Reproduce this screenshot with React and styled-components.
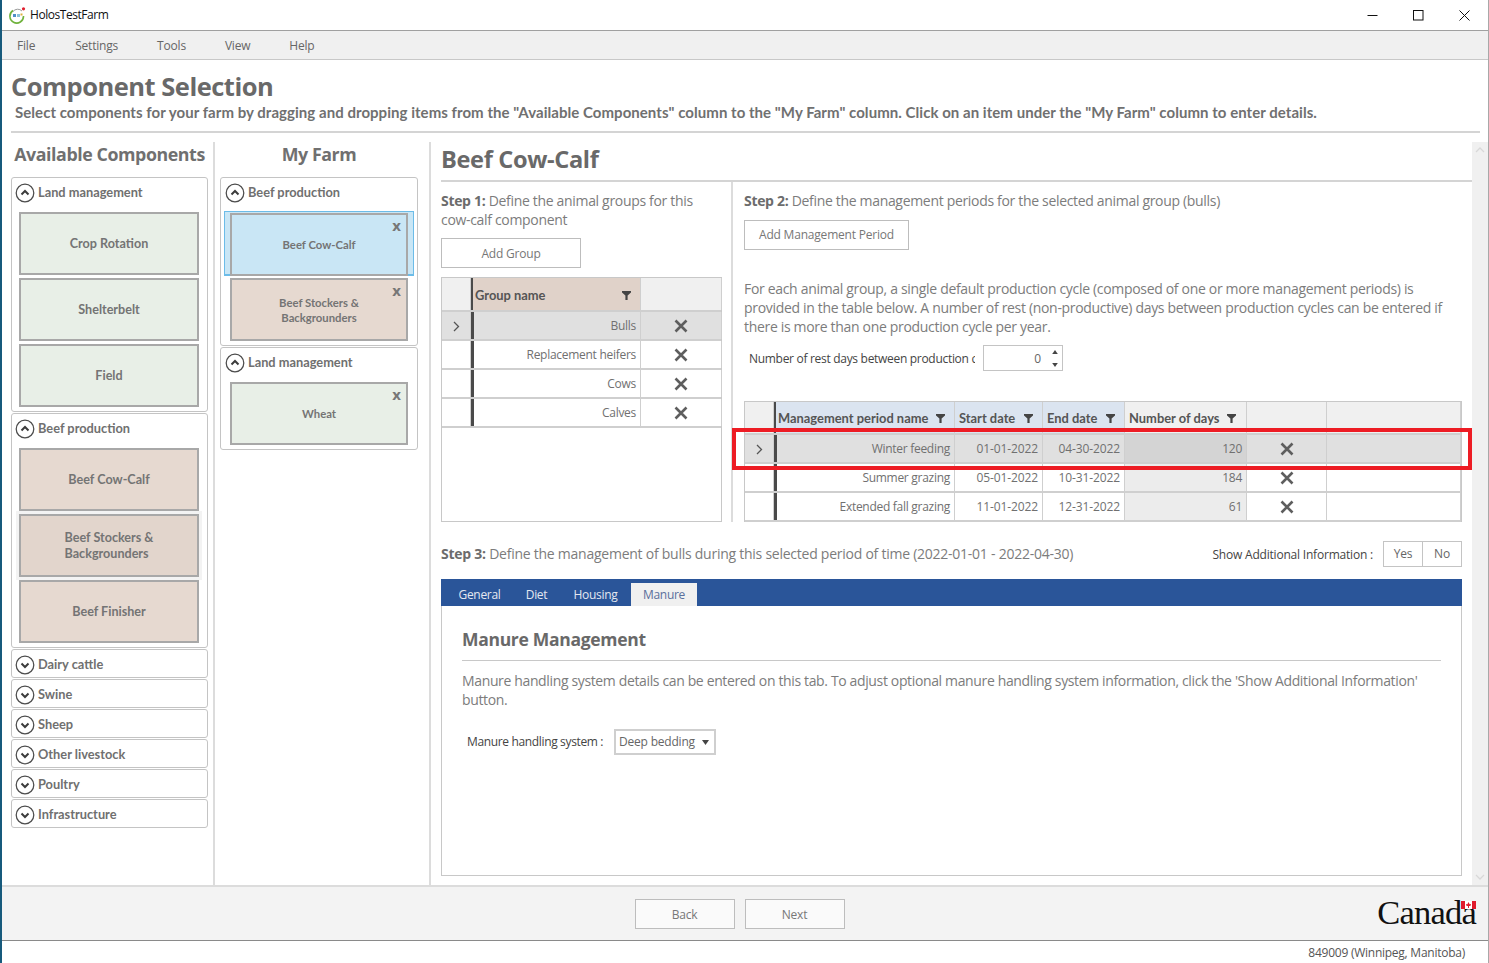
import React from 'react';
import styled, { createGlobalStyle } from 'styled-components';

const Global = createGlobalStyle`
  html, body { margin: 0; padding: 0; background: #fff; overflow: hidden; }
  * { box-sizing: border-box; }
`;
const UI = `"Open Sans", "Noto Sans", sans-serif`;
const LB = `Lato, "Open Sans", sans-serif`;

const Windows = styled.div`
  position: relative; width: 1489px; height: 963px; display: flex; flex-direction: column;
  border-left: 2px solid #175a7c; border-right: 1px solid #a8a8a8; background: #fff;
  font-family: ${UI}; color: #777; overflow: hidden;
`;
const TitleBar = styled.div`
  height: 30px; display: flex; align-items: center; padding-left: 7px; background: #fff; flex: none;
`;
const TitleText = styled.span`
  font-size: 12px; line-height: 14px; color: #111; margin-left: 4px; margin-top: -1px; font-family: ${UI}; letter-spacing: -0.45px; flex: 1;
`;
const WinBtns = styled.div`display: flex; padding-right: 1px;`;
const WinBtn = styled.div`
  width: 46px; height: 30px; display: flex; align-items: center; justify-content: center; color: #111;
`;
const Menu = styled.div`
  height: 30px; flex: none; display: flex; align-items: center; background: #f0f0f0;
  border-top: 1px solid #a0a0a0; border-bottom: 1px solid #c8c8c8;
`;
const MenuItem = styled.span`
  font-size: 12px; color: #666; letter-spacing: -0.2px; margin-left: ${p => p.$ml}px;
`;
const PageHead = styled.div`height: 82px; flex: none; padding: 9px 8px 0 9px;`;
const PageTitle = styled.h1`
  margin: 0; font: 700 25.5px/34px ${UI}; color: #696969; letter-spacing: -0.5px;
`;
const PageSub = styled.p`
  margin: 0 0 0 4px; font: 700 15px/19px ${LB}; color: #707070; white-space: nowrap; letter-spacing: 0.045px;
`;
const HR = styled.div`height: 2px; background: #d4d4d4; margin-top: 9px;`;
const Body = styled.div`flex: 1; display: flex; min-height: 0;`;
const Col = styled.div`
  flex: none; width: ${p => p.$w}px; border-right: 2px solid #dcdcdc; padding: 0 ${p => p.$pr}px 0 ${p => p.$pl}px;
`;
const ColTitle = styled.h2`
  margin: 0; height: 35px; padding-top: 0; font: 700 17.8px/25px ${UI}; color: #707070; text-align: center; white-space: nowrap; letter-spacing: -0.42px;
`;
const Accordion = styled.div`
  border: 1px solid #c4c4c4; border-radius: 3px; background: #fff; margin-bottom: 1px;
  height: ${p => p.$h}px; padding: 0 ${p => p.$px}px;
`;
const AccHead = styled.div`
  height: 29px; display: flex; align-items: center; margin-left: -4px; gap: 3px;
  font: 700 12.8px/1 ${LB}; color: #707070;
`;
const AccLabel = styled.span`margin-top: -1px;`;
const Card = styled.div`
  position: relative; height: 63px; margin-top: ${p => p.$mt}px; width: ${p => p.$w || 180}px;
  margin-left: ${p => p.$ml || 0}px;
  background: ${p => p.$bg}; border: 2px solid #a8a8a8;
  display: flex; align-items: center; justify-content: center; text-align: ${p => p.$left ? 'left' : 'center'};
  font: 700 ${p => p.$small ? '11.3px/15px' : '12.6px/16px'} ${LB}; color: #747474;
  box-shadow: ${p => p.$halo ? '0 0 0 3px #f3f3f3' : 'none'};
`;
const Sel = styled.div`
  margin: 4px 0 0 -5px; width: 190px; height: 65px; background: #c9e6f5; border: 1px solid #6cbce8; border-bottom-width:2px;
  padding: 1px 5px; 
`;
const CardX = styled.span`
  position: absolute; right: 5px; top: 4px; font: 700 15px/13px ${UI}; color: #777;
`;
const Main = styled.div`flex: 1; min-width: 0; padding-left: 10px; display: flex; flex-direction: column;`;
const MainTitle = styled.h2`
  margin: 0; height: 40px; padding-top: 1px; font: 700 23.6px/32px ${UI}; color: #696969; letter-spacing: -0.35px; border-bottom: 2px solid #d4d4d4;
`;
const Steps = styled.div`display: flex; height: 340px;`;
const Step1 = styled.div`width: 292px; flex: none; border-right: 2px solid #dcdcdc; padding-top: 9px;`;
const Step2 = styled.div`flex: 1; padding: 9px 10px 0 11px;`;
const Text = styled.p`
  margin: 0; font: 400 14px/19px ${UI}; color: #7c7c7c; letter-spacing: -0.32px;
  strong { font-weight: 700; color: #6c6c6c; }
`;
const Para = styled(Text)`margin-top: 29px;`;
const Btn = styled.div`
  width: ${p => p.$w}px; height: 30px; border: 1px solid #bdbdbd; background: #fff; display: flex; align-items: center; justify-content: center;
  font: 400 12px/1 ${UI}; color: #777; letter-spacing: -0.2px; margin-top: ${p => p.$mt || 0}px; padding-top: ${p => p.$pt || 0}px;
`;
const GridWrap = styled.div`
  margin-top: ${p => p.$mt}px; width: ${p => p.$w}px; height: ${p => p.$h}px; border: 1px solid #c8c8c8; border-bottom-width:${p => p.$bb || 1}px; background: #fff;
`;
const Row = styled.div`
  display: grid; grid-template-columns: ${p => p.$cols}; height: ${p => p.$h}px;
  background: ${p => p.$sel ? '#e0e0e0' : '#fff'}; border-bottom: 2px solid #cfcfcf;
`;
const Cell = styled.div`
  display: flex; align-items: center; justify-content: ${p => p.$c ? 'center' : 'flex-end'}; padding: 1px 4px 0;
  border-right: 1px solid #cfcfcf; font: 400 12px/1 ${UI}; color: #707070; letter-spacing: -0.28px; white-space: nowrap;
  background: ${p => p.$bg || 'transparent'};
`;
const DateCell = styled(Cell)`letter-spacing: -0.1px;`;
const RowHead = styled(Cell)`
  background: ${p => p.$sel ? '#e0e0e0' : '#fff'}; border-right: 3px solid #4a4a4a; justify-content: center; padding: 0;
`;
const HeadCell = styled.div`
  display: flex; align-items: center; justify-content: space-between; padding: ${p => p.$pt}px ${p => p.$pr || 9}px 0 ${p => p.$pl || 2}px; background: ${p => p.$bg};
  border-right: 1px solid #cfcfcf; font: 700 12.9px/1 ${LB}; color: #555; white-space: nowrap;
`;
const RestRow = styled.div`display: flex; align-items: center; margin: 9px 0 0 5px; height: 26px;`;
const RestLabel = styled.div`
  width: 226px; padding-top: 2px; overflow: hidden; white-space: nowrap; font: 400 12px/1.2 ${UI}; color: #444; letter-spacing: -0.3px; 
`;
const Spin = styled.div`
  margin-left: 8px; width: 80px; height: 26px; border: 1px solid #c4c4c4; display: flex; align-items: center; justify-content: flex-end; font: 400 12px/1 ${UI}; color: #666; gap: 11px; padding: 1px 4px 0 0;
`;
const SpinArrows = styled.div`display: flex; flex-direction: column; gap: 9px; margin-top: -1px;`;
const Step3Row = styled.div`display: flex; align-items: center; height: 26px; margin-top: 19px; padding-right: 10px;`;
const Step3Text = styled(Text)`flex: 1; margin-top: -2px; letter-spacing: -0.25px;`;
const ShowLabel = styled.span`font: 400 12px/1 ${UI}; padding-top: 1px; color: #444; letter-spacing: -0.2px; margin-right: 10px;`;
const YesNo = styled.div`
  width: ${p => p.$w}px; height: 26px; border: 1px solid #c4c4c4; margin-left: ${p => p.$ml || 0}px; display: flex; align-items: center; justify-content: center; font: 400 12px/1 ${UI}; color: #666; letter-spacing: -0.2px;
`;
const TabBox = styled.div`margin: 12px 10px 0 0; height: 297px; border: 1px solid #c8c8c8; border-top: 0;`;
const TabBar = styled.div`height: 27px; background: #2a5599; display: flex; align-items: flex-end; margin: 0 -1px; padding-left: 5px;`;
const Tab = styled.div`
  height: ${p => p.$on ? 23 : 27}px; width: ${p => p.$w}px; display: flex; align-items: center; justify-content: center; background: ${p => p.$on ? '#f0f0f0' : 'transparent'};
  font: 400 12px/1 ${UI}; color: ${p => p.$on ? '#5a6f9c' : '#e4e8f0'}; letter-spacing: -0.3px;
  padding-top: ${p => p.$on ? 0 : 4}px;
`;
const TabBody = styled.div`padding: 19px 20px 0 20px;`;
const H3 = styled.h3`
  margin: 0; height: 36px; font: 700 17.5px/28px ${UI}; color: #696969; letter-spacing: -0.3px; border-bottom: 1px solid #c8c8c8;
`;
const ManureText = styled(Text)`margin-top: 10px; letter-spacing: -0.36px;`;
const SelRow = styled.div`display: flex; align-items: center; margin: 20px 0 0 5px; height: 26px;`;
const SelLabel = styled.span`width: 147px; font: 400 12px/1 ${UI}; color: #444; letter-spacing: -0.35px;`;
const Select = styled.div`
  width: 102px; height: 26px; border: 2px solid #cfcfcf; display: flex; align-items: center; justify-content: space-between; padding: 0 5px 0 3px; font: 400 12px/1 ${UI}; color: #666; letter-spacing: -0.2px;
`;
const Scroll = styled.div`
  width: 16px; flex: none; background: #f0f0f0; display: flex; flex-direction: column; justify-content: space-between; align-items: center; padding: 5px 0;
`;
const Footer = styled.div`
  height: 56px; flex: none; background: #f3f3f3; border-top: 2px solid #dcdcdc; border-bottom: 1px solid #8a8a8a; position: relative;
  display: flex; align-items: center; justify-content: center; gap: 10px; padding-right: 11px;
`;
const NavBtn = styled(Btn)`width: 100px; background: #fafafa;`;
const CanadaMark = styled.div`
  position: absolute; right: 12px; top: 5px; font: 400 34.5px/40px "Liberation Serif", serif; color: #111; letter-spacing: -0.8px;
`;
const CanadaFlag = styled.svg`position: absolute; right: 0; top: 9px;`;
const Status = styled.div`
  height: 22px; flex: none; font: 400 12px/23px ${UI}; color: #555; text-align: right; padding-right: 23px; letter-spacing: -0.25px;
`;
const Highlight = styled.div`
  position: absolute; left: 730px; top: 428px; width: 740px; height: 42px; border: 4px solid #ed1c24;
`;

const Chev = ({ up }) => (
  <svg width="20" height="20" viewBox="0 0 20 20">
    <circle cx="10" cy="10" r="8.8" fill="#fff" stroke="#4c4c4c" strokeWidth="1.25" />
    <path d={up ? 'M6.5 11.5L10 8l3.5 3.5' : 'M6.5 8.5L10 12l3.5-3.5'} fill="none" stroke="#3c3c3c" strokeWidth="2" />
  </svg>
);
const XIcon = () => (
  <svg width="14" height="14" viewBox="0 0 14 14"><path d="M1.5 1.5l11 11M12.5 1.5l-11 11" stroke="#5e5e5e" strokeWidth="2.6" /></svg>
);
const Filter = () => (
  <svg width="9" height="9" viewBox="0 0 9 9"><path d="M0 0h9v1.5L5.6 4.6V9H3.4V4.6L0 1.5z" fill="#444" /></svg>
);
const Arrow = () => (
  <svg width="7" height="11" viewBox="0 0 7 11"><path d="M1 1l4.5 4.5L1 10" fill="none" stroke="#555" strokeWidth="1.3" /></svg>
);
const Tri = ({ up, w = 6, h = 4 }) => (
  <svg width={w} height={h} viewBox="0 0 7 5"><path d={up ? 'M3.5 0L7 5H0z' : 'M0 0h7L3.5 5z'} fill="#444" /></svg>
);
const AppIcon = () => (
  <svg width="17" height="17" viewBox="0 0 17 17">
    <path d="M4 3.5A6.8 6.8 0 1 0 14.5 9" fill="none" stroke="#6fb23c" strokeWidth="1.6" />
    <path d="M4 4.5A6 6 0 0 1 13 4" fill="none" stroke="#9a9a9a" strokeWidth="1" />
    <rect x="4" y="7" width="3" height="3" fill="#4f8fc8" /><rect x="8" y="7" width="3" height="3" fill="#8bc1dc" /><rect x="11.5" y="6.5" width="2" height="2" fill="#e0b040" />
    <circle cx="14.5" cy="1.8" r="1.6" fill="#e02030" />
  </svg>
);
const Acc = ({ title, up, h, px = 7, children }) => (
  <Accordion $h={h} $px={px}>
    <AccHead><Chev up={up} /><AccLabel>{title}</AccLabel></AccHead>
    {children}
  </Accordion>
);

const G = '#e8efe7';
const B = '#e6d9d0';

const groupCols = '29px 2px 168px 81px';
const periodCols = '29px 2px 179px 88px 82px 122px 80px 134px';

const groups = ['Bulls', 'Replacement heifers', 'Cows', 'Calves'];
const periods = [
  ['Winter feeding', '01-01-2022', '04-30-2022', '120'],
  ['Summer grazing', '05-01-2022', '10-31-2022', '184'],
  ['Extended fall grazing', '11-01-2022', '12-31-2022', '61'],
];

export default function App() {
  return (
    <Windows>
      <Global />
      <TitleBar>
        <AppIcon />
        <TitleText>HolosTestFarm</TitleText>
        <WinBtns>
          <WinBtn><svg width="11" height="11" viewBox="0 0 11 11"><path d="M0.5 5.5h10" stroke="#111" /></svg></WinBtn>
          <WinBtn><svg width="11" height="11" viewBox="0 0 11 11"><rect x=".5" y=".5" width="9.5" height="9.5" fill="none" stroke="#111" /></svg></WinBtn>
          <WinBtn><svg width="11" height="11" viewBox="0 0 11 11"><path d="M.5.5l10 10M10.5.5l-10 10" stroke="#111" /></svg></WinBtn>
        </WinBtns>
      </TitleBar>
      <Menu>
        <MenuItem $ml={15}>File</MenuItem>
        <MenuItem $ml={40}>Settings</MenuItem>
        <MenuItem $ml={39}>Tools</MenuItem>
        <MenuItem $ml={39}>View</MenuItem>
        <MenuItem $ml={39}>Help</MenuItem>
      </Menu>
      <PageHead>
        <PageTitle>Component Selection</PageTitle>
        <PageSub>Select components for your farm by dragging and dropping items from the "Available Components" column to the "My Farm" column. Click on an item under the "My Farm" column to enter details.</PageSub>
        <HR />
      </PageHead>
      <Body>
        <Col $w={213} $pl={9} $pr={5}>
          <ColTitle>Available Components</ColTitle>
          <Acc title="Land management" up h={235}>
            <Card $mt={5} $bg={G}>Crop Rotation</Card>
            <Card $mt={3} $bg={G}>Shelterbelt</Card>
            <Card $mt={3} $bg={G}>Field</Card>
          </Acc>
          <Acc title="Beef production" up h={235}>
            <Card $mt={5} $bg={B}>Beef Cow-Calf</Card>
            <Card $mt={3} $bg="#e2d5cc" $halo $left>Beef Stockers &amp;<br />Backgrounders</Card>
            <Card $mt={3} $bg={B}>Beef Finisher</Card>
          </Acc>
          {['Dairy cattle', 'Swine', 'Sheep', 'Other livestock', 'Poultry', 'Infrastructure'].map(t => (
            <Acc key={t} title={t} h={29} />
          ))}
        </Col>
        <Col $w={216} $pl={5} $pr={11}>
          <ColTitle>My Farm</ColTitle>
          <Acc title="Beef production" up h={169} px={8}>
            <Sel><Card $small $mt={0} $w={178} $bg="#c9e6f5">Beef Cow-Calf<CardX>x</CardX></Card></Sel>
            <Card $small $mt={2} $ml={1} $w={178} $bg={B}>Beef Stockers &amp;<br />Backgrounders<CardX>x</CardX></Card>
          </Acc>
          <Acc title="Land management" up h={103} px={8}>
            <Card $small $mt={5} $ml={1} $w={178} $bg={G}>Wheat<CardX>x</CardX></Card>
          </Acc>
        </Col>
        <Main>
          <MainTitle>Beef Cow-Calf</MainTitle>
          <Steps>
            <Step1>
              <Text><strong>Step 1:</strong> Define the animal groups for this<br />cow-calf component</Text>
              <Btn $w={140} $mt={9} $pt={1}>Add Group</Btn>
              <GridWrap $mt={9} $w={281} $h={245}>
                <Row $cols={groupCols} $h={34}>
                  <Cell $bg="#f0f0f0" />
                  <RowHead />
                  <HeadCell $pt={2} $bg="#e0d2c9">Group name <Filter /></HeadCell>
                  <Cell $bg="#f0f0f0" />
                </Row>
                {groups.map((g, i) => (
                  <Row key={g} $cols={groupCols} $h={29} $sel={i === 0}>
                    <Cell $c>{i === 0 && <Arrow />}</Cell>
                    <RowHead $sel={i === 0} />
                    <Cell>{g}</Cell>
                    <Cell $c><XIcon /></Cell>
                  </Row>
                ))}
              </GridWrap>
            </Step1>
            <Step2>
              <Text><strong>Step 2:</strong> Define the management periods for the selected animal group (bulls)</Text>
              <Btn $w={165} $mt={10}>Add Management Period</Btn>
              <Para>For each animal group, a single default production cycle (composed of one or more management periods) is<br />provided in the table below. A number of rest (non-productive) days between production cycles can be entered if<br />there is more than one production cycle per year.</Para>
              <RestRow>
                <RestLabel>Number of rest days between production cycles</RestLabel>
                <Spin>0<SpinArrows><Tri up /><Tri /></SpinArrows></Spin>
              </RestRow>
              <GridWrap $mt={30} $w={718} $h={121} $bb={2}>
                <Row $cols={periodCols} $h={33}>
                  <Cell $bg="#f0f0f0" />
                  <RowHead />
                  <HeadCell $pt={1} $bg="#dbe4f0">Management period name <Filter /></HeadCell>
                  <HeadCell $pt={1} $pl={4} $bg="#dbe4f0">Start date <Filter /></HeadCell>
                  <HeadCell $pt={1} $pl={4} $bg="#dbe4f0">End date <Filter /></HeadCell>
                  <HeadCell $pt={1} $pl={4} $pr={10} $bg="#f0f0f0">Number of days <Filter /></HeadCell>
                  <Cell $bg="#f0f0f0" />
                  <Cell $bg="#f0f0f0" />
                </Row>
                {periods.map((p, i) => (
                  <Row key={p[0]} $cols={periodCols} $h={29} $sel={i === 0}>
                    <Cell $c>{i === 0 && <Arrow />}</Cell>
                    <RowHead $sel={i === 0} />
                    <Cell>{p[0]}</Cell>
                    <DateCell>{p[1]}</DateCell>
                    <DateCell>{p[2]}</DateCell>
                    <Cell $bg={i === 0 ? '#d4d4d4' : '#ececec'}>{p[3]}</Cell>
                    <Cell $c><XIcon /></Cell>
                    <Cell />
                  </Row>
                ))}
              </GridWrap>
            </Step2>
          </Steps>
          <Step3Row>
            <Step3Text><strong>Step 3:</strong> Define the management of bulls during this selected period of time (2022-01-01 - 2022-04-30)</Step3Text>
            <ShowLabel>Show Additional Information :</ShowLabel>
            <YesNo $w={40}>Yes</YesNo>
            <YesNo $w={40} $ml={-1}>No</YesNo>
          </Step3Row>
          <TabBox>
            <TabBar>
              <Tab $w={67}>General</Tab>
              <Tab $w={47}>Diet</Tab>
              <Tab $w={71}>Housing</Tab>
              <Tab $w={66} $on>Manure</Tab>
            </TabBar>
            <TabBody>
              <H3>Manure Management</H3>
              <ManureText>Manure handling system details can be entered on this tab. To adjust optional manure handling system information, click the 'Show Additional Information'<br />button.</ManureText>
              <SelRow>
                <SelLabel>Manure handling system :</SelLabel>
                <Select>Deep bedding <Tri w={7} h={5} /></Select>
              </SelRow>
            </TabBody>
          </TabBox>
        </Main>
        <Scroll>
          <svg width="10" height="6" viewBox="0 0 10 6"><path d="M1 5l4-4 4 4" fill="none" stroke="#d8d8d8" strokeWidth="1.3" /></svg>
          <svg width="10" height="6" viewBox="0 0 10 6"><path d="M1 1l4 4 4-4" fill="none" stroke="#d8d8d8" strokeWidth="1.3" /></svg>
        </Scroll>
      </Body>
      <Footer>
        <NavBtn $pt={2}>Back</NavBtn>
        <NavBtn $pt={2}>Next</NavBtn>
        <CanadaMark>
          Canada
          <CanadaFlag width="15" height="8" viewBox="0 0 15 8"><rect width="15" height="8" fill="#e01b2c" /><rect x="4" width="7" height="8" fill="#fff" /><path d="M7.5 1L8.6 3.2 10 3 9.4 5H8v2H7V5H5.6L5 3l1.4.2z" fill="#e01b2c" /></CanadaFlag>
        </CanadaMark>
      </Footer>
      <Status>849009 (Winnipeg, Manitoba)</Status>
      <Highlight />
    </Windows>
  );
}
